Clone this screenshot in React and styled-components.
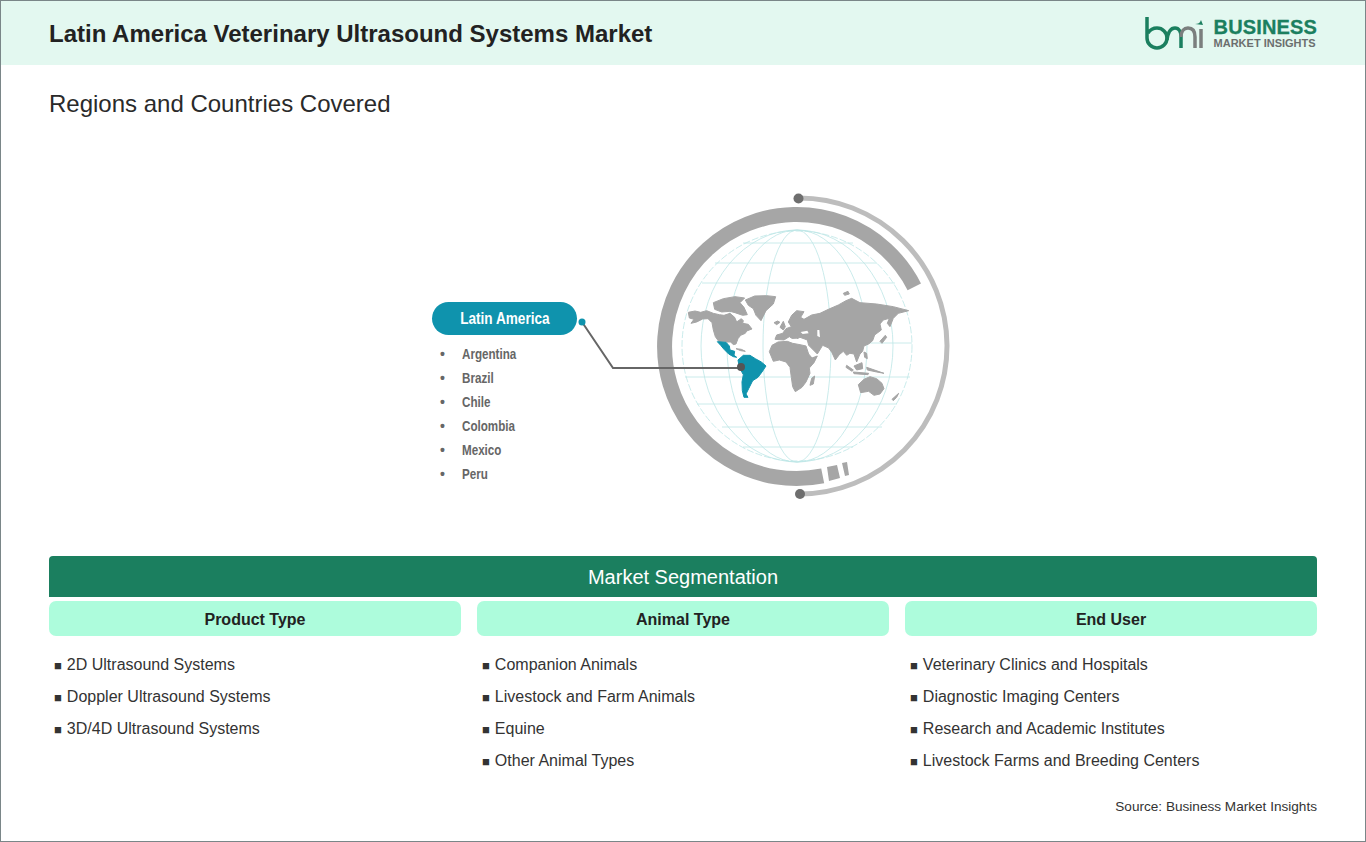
import React from "react";
import styled, { createGlobalStyle } from "styled-components";

const GlobalStyle = createGlobalStyle`
  html, body {
    margin: 0;
    padding: 0;
    background: #fff;
    font-family: "Liberation Sans", Arial, sans-serif;
  }
`;

const Frame = styled.div`
  box-sizing: border-box;
  width: 1366px;
  height: 842px;
  border: 1px solid #7a8688;
  display: flex;
  flex-direction: column;
  color: #222;
`;

const Header = styled.header`
  height: 64px;
  flex: none;
  background: #e3f8f0;
  display: flex;
  align-items: center;
  justify-content: space-between;
  padding: 0 48px;
`;

const Title = styled.h1`
  margin: 2px 0 0;
  font-size: 24px;
  font-weight: 700;
  color: #222;
`;

const Logo = styled.div`
  display: flex;
  align-items: center;
  gap: 10px;
  margin-top: -1px;
`;

const LogoText = styled.div`
  display: flex;
  flex-direction: column;
`;

const LogoName = styled.span`
  font-size: 20px;
  line-height: 20px;
  font-weight: 700;
  letter-spacing: 0.15px;
  color: #1b7f5f;
  -webkit-text-stroke: 0.3px #1b7f5f;
`;

const LogoSub = styled.span`
  font-size: 11px;
  line-height: 12px;
  font-weight: 700;
  color: #6b6f6e;
`;

const SubTitle = styled.h2`
  margin: 25px 48px 0;
  font-size: 24px;
  line-height: 28px;
  font-weight: 400;
  color: #2a2a2a;
`;

const Stage = styled.section`
  height: 438px;
  flex: none;
  display: flex;
  align-items: flex-start;
  padding-left: 431px;
`;

const RegionColumn = styled.div`
  width: 145px;
  margin-top: 184px;
  flex: none;
`;

const RegionPill = styled.div`
  height: 33px;
  border-radius: 17px;
  background: #0f93ad;
  color: #fff;
  font-weight: 700;
  font-size: 17px;
  line-height: 33px;
  text-align: center;
`;

const PillLabel = styled.span`
  display: inline-block;
  transform: scaleX(0.8);
`;

const CountryList = styled.ul`
  list-style: none;
  margin: 7px 0 0;
  padding: 0;
`;

const Country = styled.li`
  height: 24px;
  line-height: 24px;
  padding-left: 30px;
  position: relative;
  font-weight: 700;
  font-size: 14px;
  color: #666;
  &::before {
    content: "•";
    position: absolute;
    left: 8px;
    top: 0;
  }
`;

const CountryLabel = styled.span`
  display: inline-block;
  transform: scaleX(0.83);
  transform-origin: left center;
`;

const GlobeSvg = styled.svg`
  flex: none;
  margin-top: 72px;
  display: block;
`;

const Segmentation = styled.section`
  margin: 0 48px;
  display: flex;
  flex-direction: column;
`;

const SegmentBar = styled.div`
  height: 41px;
  line-height: 42px;
  background: #1b7f5f;
  border-radius: 4px 4px 0 0;
  color: #fff;
  font-size: 20px;
  text-align: center;
`;

const SegmentGrid = styled.div`
  display: grid;
  grid-template-columns: repeat(3, 412px);
  column-gap: 16px;
  margin-top: 4px;
`;

const SegmentHead = styled.div`
  height: 35px;
  line-height: 37px;
  background: #adfcdc;
  border-radius: 7px;
  font-size: 16px;
  font-weight: 700;
  text-align: center;
  color: #222;
`;

const SegmentList = styled.ul`
  list-style: none;
  margin: 13px 0 0;
  padding: 0 0 0 5px;
`;

const SegmentItem = styled.li`
  height: 32px;
  line-height: 32px;
  font-size: 16px;
  color: #333;
  white-space: nowrap;
  &::before {
    content: "■";
    font-size: 13px;
    margin-right: 5px;
    color: #333;
  }
`;

const Source = styled.div`
  margin: 22px 48px 0;
  text-align: right;
  font-size: 13.6px;
  color: #333;
`;

const meridians = [0, 34, 70, 96];

// [x1, x2, y] in page pixels
const parallels = [
  [743, 853, 243],
  [715, 877, 263],
  [702, 895, 283],
  [867, 912, 343],
  [685, 910, 377],
  [697, 897, 404],
  [722, 882, 427],
  [743, 853, 447],
];

const mapShapes = [
  // north america
  "M25,97 L45,93 L62,97 L80,92 L100,100 L118,104 L132,106 L150,100 L164,112 L170,126 L184,116 L190,122 L188,130 L205,133 L216,147 L200,153 L196,160 L182,166 L174,176 L168,192 L160,194 L152,186 L138,186 L116,184 L106,170 L100,150 L96,128 L84,116 L68,117 L50,126 L33,130 L42,118 L28,114 Z",
  // arctic islands
  "M100,68 L130,56 L165,50 L194,54 L180,68 L192,82 L202,104 L188,106 L165,98 L150,94 L125,96 L104,88 Z",
  // greenland
  "M196,60 L224,48 L260,47 L287,50 L280,72 L258,92 L243,122 L228,106 L220,86 L205,76 Z",
  // iceland, uk
  "M282,128 L293,123 L300,127 L290,134 Z",
  "M300,142 L310,124 L316,140 L310,150 Z",
  // caribbean
  "M168,206 L184,208 L196,214 L182,212 Z",
  // africa
  "M268,215 L276,196 L294,186 L322,184 L338,190 L360,194 L378,198 L386,222 L396,234 L412,228 L402,248 L388,264 L390,280 L378,306 L366,322 L346,335 L338,320 L334,292 L330,262 L318,246 L298,240 L280,244 Z",
  "M395,295 L404,288 L400,312 L390,316 Z",
  // eurasia
  "M285,178 L290,165 L308,160 L318,146 L334,140 L325,126 L335,106 L350,92 L372,95 L362,112 L372,118 L395,105 L420,100 L445,88 L475,75 L498,62 L515,55 L540,68 L590,72 L640,80 L686,92 L655,100 L640,115 L630,140 L622,130 L628,115 L610,120 L600,132 L604,150 L584,165 L578,182 L566,192 L552,198 L548,214 L540,222 L530,246 L522,222 L510,220 L500,226 L490,214 L478,224 L466,240 L456,218 L446,204 L428,196 L412,222 L386,196 L382,180 L360,172 L344,180 L328,170 L312,180 Z",
  // islands in the far east
  "M490,40 L504,34 L508,42 L494,46 Z",
  "M600,184 L616,166 L620,172 L606,190 Z",
  "M552,216 L560,220 L562,236 L554,232 Z",
  "M500,256 L520,270 L516,274 L498,262 Z",
  "M522,258 L546,248 L548,266 L530,270 Z",
  "M520,276 L566,280 L564,284 L522,281 Z",
  "M560,262 L612,280 L590,276 L562,270 Z",
  // australia
  "M535,314 L552,298 L570,290 L590,296 L606,310 L612,326 L600,342 L582,346 L566,334 L542,338 Z",
  "M636,358 L656,340 L650,352 L640,362 Z",
];

const latinShapes = [
  "M112,185 L138,187 L148,198 L150,210 L164,214 L162,226 L170,232 L160,230 L146,222 L132,208 L122,196 Z",
  "M174,240 L190,226 L210,226 L226,236 L244,246 L258,258 L246,276 L234,292 L218,302 L206,326 L198,342 L204,352 L192,352 L187,332 L186,306 L190,284 L178,262 Z",
];

// small white seas cut out of the land
const seaShapes = [
  "M362,156 L382,152 L386,160 L368,162 Z",
  "M412,150 L418,150 L420,172 L412,168 Z",
  "M320,178 L350,176 L372,184 L340,184 Z",
];

const Globe = () => (
  <GlobeSvg width="378" height="310" viewBox="577 190 378 310" fill="none">
    <g stroke="#bde6e6" strokeWidth="0.8">
      <circle cx="797" cy="346" r="115" strokeDasharray="7 2" />
      {meridians.map((rx) => (
        <ellipse key={rx} cx="797" cy="346" rx={rx} ry="116" />
      ))}
      {parallels.map(([x1, x2, y]) => (
        <line key={y} x1={x1} x2={x2} y1={y} y2={y} />
      ))}
    </g>
    <g transform="translate(680 280) scale(.3333)" strokeWidth="3" strokeLinejoin="round">
      {mapShapes.map((d) => (
        <path key={d} d={d} fill="#a5a5a5" stroke="#a5a5a5" />
      ))}
      {latinShapes.map((d) => (
        <path key={d} d={d} fill="#0f93ad" stroke="#0f93ad" />
      ))}
      {seaShapes.map((d) => (
        <path key={d} d={d} fill="#fff" />
      ))}
    </g>
    <path d="M914.3 286.8 A132 132 0 1 0 822.7 475.9" stroke="#a6a6a6" strokeWidth="15" />
    <path d="M827 467 L837 465 L840 478 L829 481 Z M842 463 L847 462 L849 475 L845 476 Z" fill="#a6a6a6" />
    <path d="M798 198 A148 148 0 0 1 800 494" stroke="#bdbdbd" strokeWidth="5" />
    <circle cx="798.5" cy="198.5" r="5" fill="#6e6e6e" />
    <circle cx="800" cy="494" r="5" fill="#6e6e6e" />
    <path d="M582 322 L613 368 L741 368" stroke="#666" strokeWidth="2" />
    <circle cx="582" cy="322" r="3.5" fill="#0f93ad" />
    <circle cx="741" cy="367" r="4" fill="#555" />
  </GlobeSvg>
);

const LogoMark = () => (
  <svg width="60" height="36" viewBox="0 0 60 36" fill="none">
    <path d="M3 2 V23 A10 10 0 1 0 13 13 C9 13 6 15 4 18" stroke="#1b7f5f" strokeWidth="3.5" />
    <path d="M23 25 C24 17 27 13 31 13 C35 13 37 17 37 22 V33" stroke="#1b7f5f" strokeWidth="3.5" />
    <path d="M37 22 C37 16 40 13 44 13 C49 13 51 17 51 22 V33" stroke="#7b7f7e" strokeWidth="3.5" />
    <path d="M57 33 V14" stroke="#7b7f7e" strokeWidth="3.5" />
    <path d="M51 9 C54 9 56 8 57 5 L59 10 Z" fill="#1b7f5f" />
  </svg>
);

const segments = [
  {
    title: "Product Type",
    items: ["2D Ultrasound Systems", "Doppler Ultrasound Systems", "3D/4D Ultrasound Systems"],
  },
  {
    title: "Animal Type",
    items: ["Companion Animals", "Livestock and Farm Animals", "Equine", "Other Animal Types"],
  },
  {
    title: "End User",
    items: [
      "Veterinary Clinics and Hospitals",
      "Diagnostic Imaging Centers",
      "Research and Academic Institutes",
      "Livestock Farms and Breeding Centers",
    ],
  },
];

const countries = ["Argentina", "Brazil", "Chile", "Colombia", "Mexico", "Peru"];

export default function App() {
  return (
    <>
      <GlobalStyle />
      <Frame>
        <Header>
          <Title>Latin America Veterinary Ultrasound Systems Market</Title>
          <Logo>
            <LogoMark />
            <LogoText>
              <LogoName>BUSINESS</LogoName>
              <LogoSub>MARKET INSIGHTS</LogoSub>
            </LogoText>
          </Logo>
        </Header>
        <SubTitle>Regions and Countries Covered</SubTitle>
        <Stage>
          <RegionColumn>
            <RegionPill>
              <PillLabel>Latin America</PillLabel>
            </RegionPill>
            <CountryList>
              {countries.map((c) => (
                <Country key={c}>
                  <CountryLabel>{c}</CountryLabel>
                </Country>
              ))}
            </CountryList>
          </RegionColumn>
          <Globe />
        </Stage>
        <Segmentation>
          <SegmentBar>Market Segmentation</SegmentBar>
          <SegmentGrid>
            {segments.map((s) => (
              <div key={s.title}>
                <SegmentHead>{s.title}</SegmentHead>
                <SegmentList>
                  {s.items.map((item) => (
                    <SegmentItem key={item}>{item}</SegmentItem>
                  ))}
                </SegmentList>
              </div>
            ))}
          </SegmentGrid>
        </Segmentation>
        <Source>Source: Business Market Insights</Source>
      </Frame>
    </>
  );
}
